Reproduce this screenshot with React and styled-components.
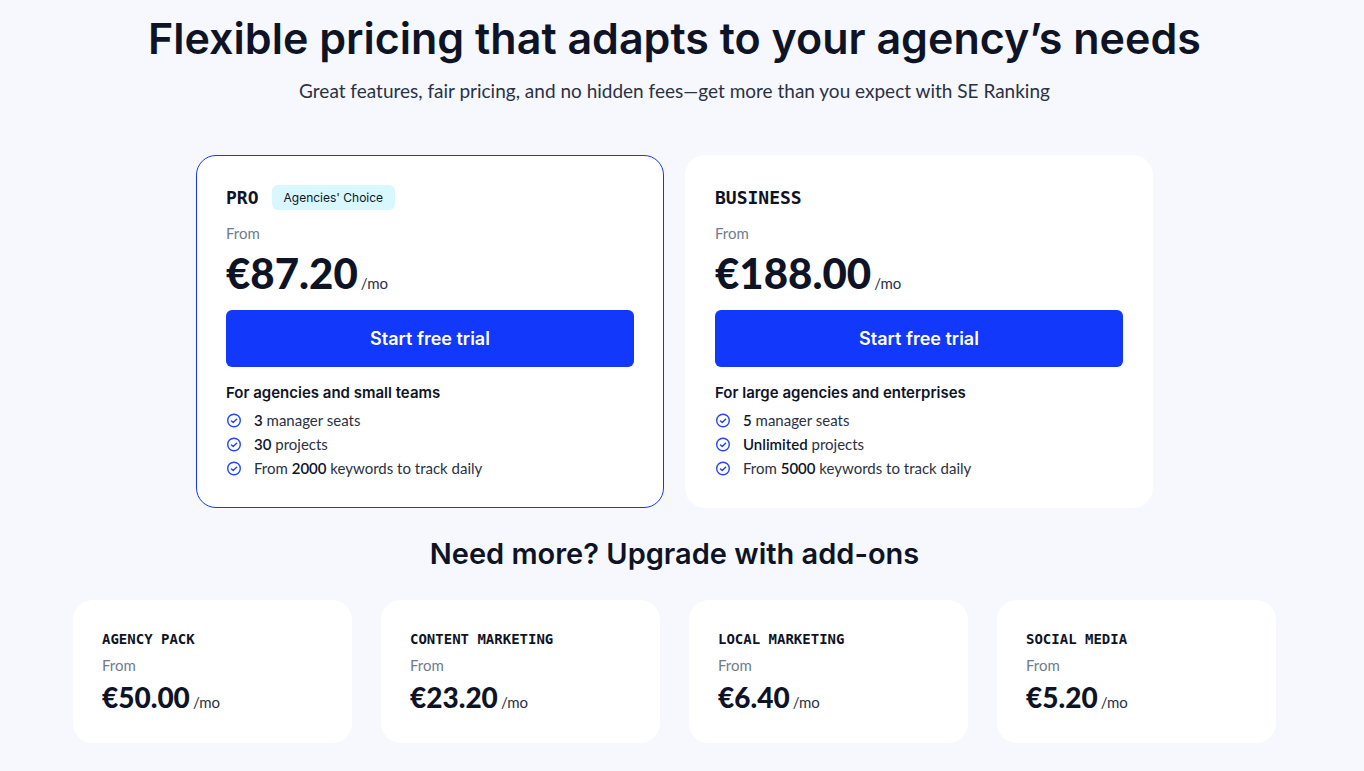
import React from 'react';
import styled, { createGlobalStyle } from 'styled-components';

const Global = createGlobalStyle`
  * { box-sizing: border-box; }
  body { margin: 0; background: #f6f8fd; color: #0e1426; font-family: Lato, sans-serif; }
  h1, h2, h3, p, ul { margin: 0; padding: 0; }
`;

const sans = "Inter, sans-serif";

const Page = styled.main`
  padding: 11px 88px 28px 73px;
  display: flex;
  flex-direction: column;
  align-items: center;
`;
const Title = styled.h1`
  font: 600 43px/54px ${sans};
  text-align: center;
`;
const Subtitle = styled.p`
  margin-top: 14px;
  color: #2b3142;
  font: 400 19px/24px Lato, sans-serif;
  text-align: center;
`;
const Plans = styled.section`
  margin-top: 52px;
  width: 100%;
  max-width: 957px;
  display: grid;
  grid-template-columns: 1fr 1fr;
  gap: 21px;
`;
const Plan = styled.article`
  background: #fff;
  border: 1px solid ${p => (p.$featured ? '#1238fb' : '#fff')};
  border-radius: 20px;
  padding: 28px 29px 27px;
`;
const PlanHead = styled.header`
  display: flex;
  align-items: center;
  gap: 13px;
  height: 27px;
`;
const PlanName = styled.h3`
  font: 700 18px/26px "DejaVu Sans Mono", monospace;
`;
const Badge = styled.span`
  background: #d8f7ff;
  border-radius: 6px;
  padding: 0 12px;
  font: 400 12px/25px ${sans};
`;
const From = styled.p`
  margin-top: ${p => (p.$small ? 6 : 12)}px;
  margin-bottom: 1px;
  color: #727b8e;
  font: 400 15px/20px Lato, sans-serif;
`;
const Price = styled.p`
  display: flex;
  align-items: baseline;
  gap: 3px;
  line-height: ${p => (p.$small ? 42 : 58)}px;
`;
const Amount = styled.strong`
  font: 900 ${p => (p.$small ? 28 : 42)}px Lato, sans-serif;
  line-height: inherit;
`;
const Period = styled.span`
  color: #2b3142;
  font: 400 15px Lato, sans-serif;
`;
const Trial = styled.button`
  display: block;
  width: 100%;
  height: 57px;
  margin-top: 8px;
  border: 0;
  border-radius: 6px;
  background: #1238fb;
  color: #fff;
  font: 600 18px ${sans};
  cursor: pointer;
`;
const Audience = styled.p`
  margin-top: 16px;
  font: 600 15px/20px ${sans};
`;
const Features = styled.ul`
  margin-top: 5px;
  list-style: none;
`;
const Feature = styled.li`
  display: flex;
  align-items: center;
  gap: 11px;
  color: #2b3142;
  font: 400 15px/24px Lato, sans-serif;
  b { color: #0e1426; font-weight: 600; }
`;
const AddonsTitle = styled.h2`
  margin-top: 28px;
  font: 600 29px/36px ${sans};
`;
const Addons = styled.section`
  margin-top: 28px;
  width: 100%;
  display: grid;
  grid-template-columns: repeat(4, 1fr);
  gap: 29px;
`;
const Addon = styled.article`
  background: #fff;
  border-radius: 20px;
  padding: 29px 29px 25px;
`;
const AddonName = styled.h3`
  font: 700 14px/20px "DejaVu Sans Mono", monospace;
`;

const Check = () => (
  <svg width="17" height="17" viewBox="0 0 17 17" fill="none" stroke="#2445f5" strokeWidth="1.4" strokeLinecap="round" strokeLinejoin="round" aria-hidden="true">
    <circle cx="8" cy="8.5" r="6.3" />
    <path d="M5.4 8.9l1.8 1.7 3.4-3.4" />
  </svg>
);

const Cost = ({ amount, small }) => (
  <>
    <From $small={small}>From</From>
    <Price $small={small}>
      <Amount $small={small}>{amount}</Amount>
      <Period>/mo</Period>
    </Price>
  </>
);

const plans = [
  { name: 'PRO', badge: "Agencies' Choice", price: '€87.20', audience: 'For agencies and small teams',
    features: [['', '3', ' manager seats'], ['', '30', ' projects'], ['From ', '2000', ' keywords to track daily']] },
  { name: 'BUSINESS', price: '€188.00', audience: 'For large agencies and enterprises',
    features: [['', '5', ' manager seats'], ['', 'Unlimited', ' projects'], ['From ', '5000', ' keywords to track daily']] },
];
const addons = [
  ['AGENCY PACK', '€50.00'],
  ['CONTENT MARKETING', '€23.20'],
  ['LOCAL MARKETING', '€6.40'],
  ['SOCIAL MEDIA', '€5.20'],
];

export default function App() {
  return (
    <Page>
      <Global />
      <Title>Flexible pricing that adapts to your agency’s needs</Title>
      <Subtitle>Great features, fair pricing, and no hidden fees—get more than you expect with SE Ranking</Subtitle>
      <Plans>
        {plans.map(plan => (
          <Plan key={plan.name} $featured={!!plan.badge}>
            <PlanHead>
              <PlanName>{plan.name}</PlanName>
              {plan.badge && <Badge>{plan.badge}</Badge>}
            </PlanHead>
            <Cost amount={plan.price} />
            <Trial type="button">Start free trial</Trial>
            <Audience>{plan.audience}</Audience>
            <Features>
              {plan.features.map(([before, bold, after]) => (
                <Feature key={after}>
                  <Check />
                  <span>{before}<b>{bold}</b>{after}</span>
                </Feature>
              ))}
            </Features>
          </Plan>
        ))}
      </Plans>
      <AddonsTitle>Need more? Upgrade with add-ons</AddonsTitle>
      <Addons>
        {addons.map(([name, price]) => (
          <Addon key={name}>
            <AddonName>{name}</AddonName>
            <Cost amount={price} small />
          </Addon>
        ))}
      </Addons>
    </Page>
  );
}
